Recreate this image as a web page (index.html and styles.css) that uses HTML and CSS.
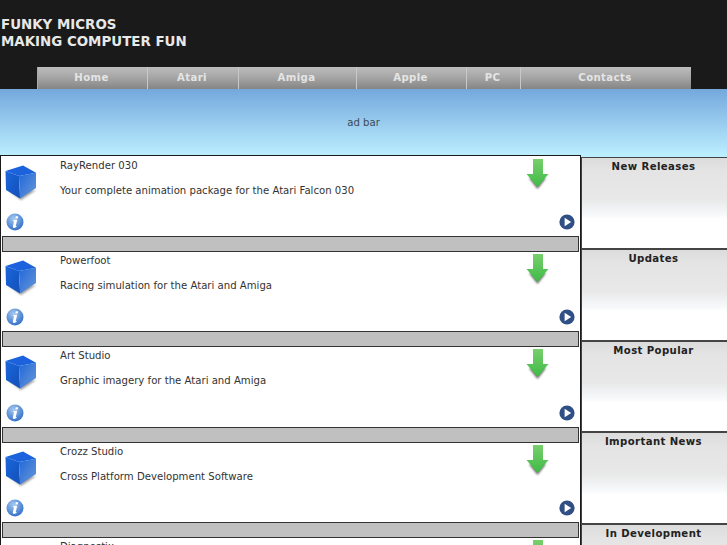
FILE: index.html
```html
<!DOCTYPE html>
<html lang="en">
<head>
<meta charset="utf-8">
<title>Funky Micros</title>
<link rel="stylesheet" href="styles.css">
</head>
<body>
<svg class="defs" width="0" height="0" aria-hidden="true">
  <defs>
    <linearGradient id="cubeL" x1="0" y1="0" x2="1" y2="1"><stop offset="0" stop-color="#1c66dc"/><stop offset="1" stop-color="#1450b8"/></linearGradient>
    <linearGradient id="cubeR" x1="0" y1="0" x2="1" y2="1"><stop offset="0" stop-color="#1f68d8"/><stop offset="1" stop-color="#6a97d8"/></linearGradient>
    <linearGradient id="arrowG" x1="0" y1="0" x2="0" y2="1"><stop offset="0" stop-color="#78cf6c"/><stop offset="1" stop-color="#3dbb45"/></linearGradient>
    <radialGradient id="infoG" cx=".4" cy=".3" r=".8"><stop offset="0" stop-color="#a4c8f0"/><stop offset="1" stop-color="#2766c4"/></radialGradient>
    <filter id="soft" x="-30%" y="-30%" width="160%" height="160%"><feGaussianBlur stdDeviation="1.2"/></filter>
    <filter id="edge" x="-5%" y="-5%" width="110%" height="110%"><feGaussianBlur stdDeviation=".35"/></filter>
    <symbol id="cube" viewBox="0 0 36 38">
      <path d="M6 27 L18 36 L33 26Z" fill="#999" filter="url(#soft)"/>
      <g filter="url(#edge)">
        <path d="M2.5 7 L16 12 L17 34.5 L3 26Z" fill="url(#cubeL)"/>
        <path d="M16 12 L33 8.7 V24 L17 34.5Z" fill="url(#cubeR)"/>
        <path d="M2.5 7 L20 1.5 L33 8.7 L16 12Z" fill="#1a62dc"/>
      </g>
    </symbol>
    <symbol id="arrow" viewBox="0 0 24 32">
      <path d="M3 20 L11.5 31 L20 20Z" fill="#666" filter="url(#soft)"/>
      <path d="M7 1 H17 V16 H22.5 L11.5 29 L.5 16 H7Z" fill="url(#arrowG)" filter="url(#edge)"/>
    </symbol>
    <symbol id="info" viewBox="0 0 18 18">
      <circle cx="9" cy="9" r="8.5" fill="url(#infoG)"/>
      <path d="M9.8 3.2 h2.4 l-.5 2.2 h-2.4Z M8.7 6.8 h2.5 l-1.4 6 q-.1.7.9.3 l-.2 1 q-1.2.8-2.5.8 q-1.5-.1-1.1-1.6 l1-4.6 q.1-.8-.8-.7 l.2-.9Z" fill="#fff"/>
    </symbol>
    <symbol id="play" viewBox="0 0 16 16">
      <circle cx="8" cy="8" r="7.6" fill="#2f4f85"/>
      <path d="M5.6 3.8 L12.2 8 L5.6 12.2Z" fill="#fff"/>
    </symbol>
  </defs>
</svg>
<header class="masthead">
  <h1 class="brand">FUNKY MICROS<br>MAKING COMPUTER FUN</h1>
  <nav class="nav">
    <a class="nav-item">Home</a>
    <a class="nav-item">Atari</a>
    <a class="nav-item">Amiga</a>
    <a class="nav-item">Apple</a>
    <a class="nav-item">PC</a>
    <a class="nav-item">Contacts</a>
  </nav>
</header>
<div class="adbar">ad bar</div>
<div class="content">
  <main class="list">
    <article class="item">
      <div class="item-top">
        <svg class="cube"><use href="#cube"/></svg>
        <div class="item-text"><div class="item-title">RayRender 030</div><div class="item-desc">Your complete animation package for the Atari Falcon 030</div></div>
        <svg class="arrow"><use href="#arrow"/></svg>
      </div>
      <div class="item-actions"><svg class="info"><use href="#info"/></svg><svg class="play"><use href="#play"/></svg></div>
      <div class="item-bar"></div>
    </article>
    <article class="item">
      <div class="item-top">
        <svg class="cube"><use href="#cube"/></svg>
        <div class="item-text"><div class="item-title">Powerfoot</div><div class="item-desc">Racing simulation for the Atari and Amiga</div></div>
        <svg class="arrow"><use href="#arrow"/></svg>
      </div>
      <div class="item-actions"><svg class="info"><use href="#info"/></svg><svg class="play"><use href="#play"/></svg></div>
      <div class="item-bar"></div>
    </article>
    <article class="item">
      <div class="item-top">
        <svg class="cube"><use href="#cube"/></svg>
        <div class="item-text"><div class="item-title">Art Studio</div><div class="item-desc">Graphic imagery for the Atari and Amiga</div></div>
        <svg class="arrow"><use href="#arrow"/></svg>
      </div>
      <div class="item-actions"><svg class="info"><use href="#info"/></svg><svg class="play"><use href="#play"/></svg></div>
      <div class="item-bar"></div>
    </article>
    <article class="item">
      <div class="item-top">
        <svg class="cube"><use href="#cube"/></svg>
        <div class="item-text"><div class="item-title">Crozz Studio</div><div class="item-desc">Cross Platform Development Software</div></div>
        <svg class="arrow"><use href="#arrow"/></svg>
      </div>
      <div class="item-actions"><svg class="info"><use href="#info"/></svg><svg class="play"><use href="#play"/></svg></div>
      <div class="item-bar"></div>
    </article>
    <article class="item">
      <div class="item-top">
        <svg class="cube"><use href="#cube"/></svg>
        <div class="item-text"><div class="item-title">Diagnostix</div><div class="item-desc"></div></div>
        <svg class="arrow"><use href="#arrow"/></svg>
      </div>
    </article>
  </main>
  <aside class="side">
    <section class="panel"><h2 class="panel-title">New Releases</h2></section>
    <section class="panel"><h2 class="panel-title">Updates</h2></section>
    <section class="panel"><h2 class="panel-title">Most Popular</h2></section>
    <section class="panel"><h2 class="panel-title">Important News</h2></section>
    <section class="panel"><h2 class="panel-title">In Development</h2></section>
  </aside>
</div>
</body>
</html>
```
FILE: styles.css
```css
html, body {
  margin: 0;
  height: 545px;
  overflow: hidden;
  background: #fff;
  font-family: "DejaVu Sans", sans-serif;
  font-size: 10.15px;
  color: #333;
}
.defs { display: block; height: 0; }
.masthead { background: #1a1a1a; height: 89px; display: flex; flex-direction: column; }
.brand {
  margin: 0;
  padding: 16px 0 0 1px;
  box-sizing: border-box;
  flex: none;
  font-size: 13.4px;
  line-height: 17px;
  font-weight: 700;
  color: #e8e8e8;
  height: 67px;
}
.nav {
  display: grid;
  grid-template-columns: 110px 91px 118px 110px 54px 171px;
  margin-left: 37px;
  width: 654px;
  height: 22px;
}
.nav-item {
  display: block;
  box-sizing: border-box;
  border-left: 1px solid #c8c8c8;
  padding-right: 2px;
  background: linear-gradient(#bdbdbd, #a4a4a4 50%, #858585);
  color: #e4e4e4;
  font-weight: 700;
  font-size: 10.15px;
  letter-spacing: .4px;
  line-height: 21px;
  text-align: center;
}
.nav-item:first-child { border-left-color: #aaa; }
.adbar {
  height: 66px;
  padding-top: 1px;
  line-height: 66px;
  text-align: center;
  background: linear-gradient(#74a8dc, #bbeeff);
  color: #3c4a55;
  box-sizing: border-box;
}
.content { display: flex; align-items: flex-start; }
.list {
  width: 581px;
  box-sizing: border-box;
  padding-top: .67px;
  border: 1px solid #1a1a1a;
  border-bottom: 0;
  background: #fff;
  flex: none;
}
.item { height: 95.33px; box-sizing: border-box; padding: 0 1px; }
.item-top { display: flex; height: 55.33px; }
.cube { width: 36px; height: 38px; margin: 7px 0 0 1px; flex: none; }
.item-text { margin-left: 21px; flex: 1; padding-top: 1px; }
.item-title { line-height: 16px; }
.item-desc { line-height: 16px; margin-top: 9px; }
.arrow { width: 24px; height: 32px; margin: 1px 29px 0 0; flex: none; }
.item-actions { display: flex; justify-content: space-between; align-items: center; height: 24px; box-sizing: border-box; padding: 0 4px 4px 4px; }
.info { width: 18px; height: 18px; }
.play { width: 16px; height: 16px; }
.item-bar { height: 16px; box-sizing: border-box; border: 1px solid #333; background: #c0c0c0; }
.side { flex: 1; padding-top: 2px; background: #bbeeff; }
.panel {
  height: 91.75px;
  box-sizing: border-box;
  border: 1px solid #444;
  border-width: 1px 0 1px 1px;
  background: linear-gradient(#dcdcdc 0, #e4e4e4 15%, #e8e8e8 45%, #f0f1f3 55%, #f8f9fb 64%, #fff 68%);
}
.panel-title {
  margin: 0;
  padding: 1px 2px 0 0;
  text-align: center;
  font-size: 10.15px;
  line-height: 16px;
  font-weight: 700;
  color: #222;
  letter-spacing: .4px;
}
```
